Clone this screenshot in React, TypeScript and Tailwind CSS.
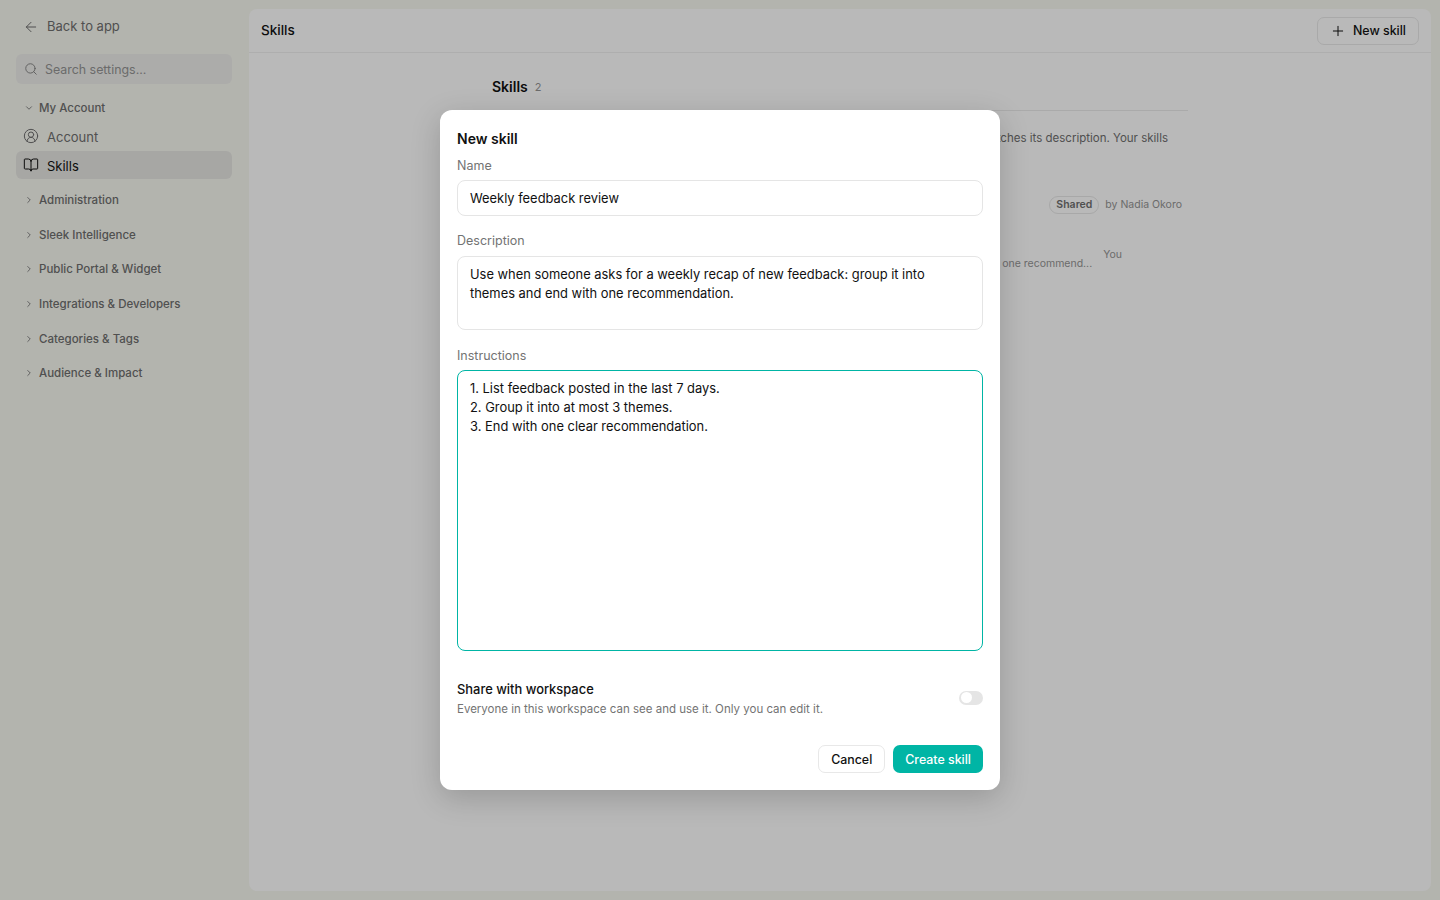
import { ArrowLeft, BookOpen, ChevronDown, ChevronRight, CircleUserRound, Plus, Search } from "lucide-react";

const groups = [
  "Administration",
  "Sleek Intelligence",
  "Public Portal & Widget",
  "Integrations & Developers",
  "Categories & Tags",
  "Audience & Impact",
];

function Sidebar() {
  return (
    <aside className="flex w-[249px] shrink-0 flex-col px-4">
      <div className="flex h-[50px] items-center gap-[8px] pl-[7px] pt-[3px] text-[13px] text-[#6b6b6b]">
        <ArrowLeft className="h-4 w-4" strokeWidth={1.5} />
        <span>Back to app</span>
      </div>
      <div className="mt-[4px] flex h-[30px] w-[216px] items-center gap-[7px] rounded-[6px] bg-[#e6e6e3] pl-[8px] text-[12.4px] text-[#8f8f8f]">
        <Search className="h-[14px] w-[14px] text-[#777]" strokeWidth={1.5} />
        <span className="mt-[2px]">Search settings...</span>
      </div>
      <div className="mt-[15px] flex h-[17px] items-center gap-[5px] pl-[8px] text-[11.5px] font-medium text-[#6b6b6b]">
        <ChevronDown className="h-[10px] w-[10px]" strokeWidth={2} />
        <span className="mt-[2px]">My Account</span>
      </div>
      <div className="mt-[6px] flex h-[28px] w-[216px] items-center gap-[8px] pl-[7px] text-[13px] text-[#6b6b6b]">
        <CircleUserRound className="h-4 w-4" strokeWidth={1.5} />
        <span className="mt-[3px]">Account</span>
      </div>
      <div className="mt-[1px] flex h-[28px] w-[216px] items-center gap-[8px] rounded-[6px] bg-[#dfdfdb] pl-[7px] text-[13px] text-[#111]">
        <BookOpen className="h-4 w-4" strokeWidth={1.5} />
        <span className="mt-[3px]">Skills</span>
      </div>
      <div className="mt-[4px] flex flex-col">
        {groups.map((g) => (
          <div key={g} className="flex h-[34.6px] items-center gap-[5px] pl-[8px] text-[11.5px] font-medium text-[#6b6b6b]">
            <ChevronRight className="h-[10px] w-[10px]" strokeWidth={2} />
            <span className="mt-[1px]">{g}</span>
          </div>
        ))}
      </div>
    </aside>
  );
}

function Main() {
  return (
    <main className="my-[9px] mr-[9px] flex min-w-0 flex-1 flex-col rounded-[8px] bg-[#f7f7f7]">
      <header className="flex h-[44px] shrink-0 items-center justify-between border-b border-[#e9e9e9] pl-3 pr-3">
        <span className="text-[13.5px] font-medium text-[#111]">Skills</span>
        <button className="flex h-[28px] items-center gap-[7px] rounded-[7px] border border-[#e2e2e2] pl-[12px] pr-[12px] text-[12.4px] font-medium text-[#111]">
          <Plus className="h-4 w-4" strokeWidth={1.5} />
          <span className="mt-[2px]">New skill</span>
        </button>
      </header>
      <div className="mx-auto w-[696px] pt-[24px]">
        <div className="flex h-[34px] items-start gap-[7px] border-b border-[#e3e3e3]">
          <span className="text-[14px] font-semibold leading-[20px] text-[#111]">Skills</span>
          <span className="text-[11px] leading-[20px] text-[#8f8f8f]">2</span>
        </div>
        <p className="mt-[18px] w-[676px] text-right text-[11.5px] leading-[18px] text-[#6b6b6b]">
          Sleek uses a skill when a request matches its description. Your skills
        </p>
        <div className="mt-[48px] flex h-[20px] w-[690px] items-center justify-end gap-[6px]">
          <span className="rounded-full border border-[#e0e0e0] px-[6px] text-[10.5px] font-semibold leading-[16px] text-[#6b6b6b]">Shared</span>
          <span className="text-[10.5px] text-[#8f8f8f]">by Nadia Okoro</span>
        </div>
        <div className="mt-[31px] flex w-[630px] justify-end gap-[11px]">
          <span className="pt-[9px] text-[10.5px] leading-[18px] text-[#8f8f8f]">Group it into themes and end with one recommend...</span>
          <span className="text-[10.5px] leading-[18px] text-[#8f8f8f]">You</span>
        </div>
      </div>
    </main>
  );
}

function NewSkillDialog() {
  return (
    <div className="absolute inset-0 flex items-center justify-center bg-black/25">
      <div className="flex h-[680px] w-[560px] flex-col rounded-[12px] bg-white px-[17px] pt-[20px] shadow-[0_8px_30px_rgba(0,0,0,0.18)]">
        <h2 className="text-[14px] font-semibold leading-[18px] text-[#111]">New skill</h2>
        <label className="mt-[9px] text-[12.5px] leading-[18px] text-[#737373]">Name</label>
        <div className="mt-[5px] flex h-[36px] items-center rounded-[8px] border border-[#e5e5e5] px-[12px] pt-[1px] text-[12.9px] text-[#111]">
          Weekly feedback review
        </div>
        <label className="mt-[16px] text-[12.5px] leading-[18px] text-[#737373]">Description</label>
        <div className="mt-[6px] h-[74px] rounded-[8px] border border-[#e5e5e5] pl-[12px] pr-[40px] pt-[8px] text-[12.9px] leading-[19px] text-[#111]">
          Use when someone asks for a weekly recap of new feedback: group it into themes and end with one recommendation.
        </div>
        <label className="mt-[17px] text-[12.5px] leading-[18px] text-[#737373]">Instructions</label>
        <div className="mt-[5px] h-[281px] rounded-[8px] border border-[#00b5a5] px-[12px] pt-[8px] text-[12.9px] leading-[19px] text-[#111]">
          <div>1. List feedback posted in the last 7 days.</div>
          <div>2. Group it into at most 3 themes.</div>
          <div>3. End with one clear recommendation.</div>
        </div>
        <div className="mt-[28px] flex items-center justify-between">
          <div>
            <div className="pt-[1px] text-[12.9px] font-medium leading-[19px] text-[#111]">Share with workspace</div>
            <div className="mt-[1px] text-[11.5px] leading-[18px] text-[#737373]">Everyone in this workspace can see and use it. Only you can edit it.</div>
          </div>
          <div className="mb-[2px] flex h-[14px] w-[24px] items-center rounded-full bg-[#e5e5e5] px-[1.5px]">
            <div className="h-[11px] w-[11px] rounded-full bg-white" />
          </div>
        </div>
        <div className="mt-[27px] flex justify-end gap-[8px]">
          <button className="h-[28px] rounded-[7px] border border-[#e8e8e8] bg-white px-[12px] pt-[2px] text-[12.4px] font-medium text-[#111]">Cancel</button>
          <button className="h-[28px] rounded-[7px] bg-[#00b5a5] px-[12px] pt-[2px] text-[12.4px] font-medium text-white">Create skill</button>
        </div>
      </div>
    </div>
  );
}

export default function App() {
  return (
    <div className="relative flex h-[900px] w-[1440px] overflow-hidden bg-[#eff0e9] font-['Inter',sans-serif] antialiased">
      <Sidebar />
      <Main />
      <NewSkillDialog />
    </div>
  );
}
